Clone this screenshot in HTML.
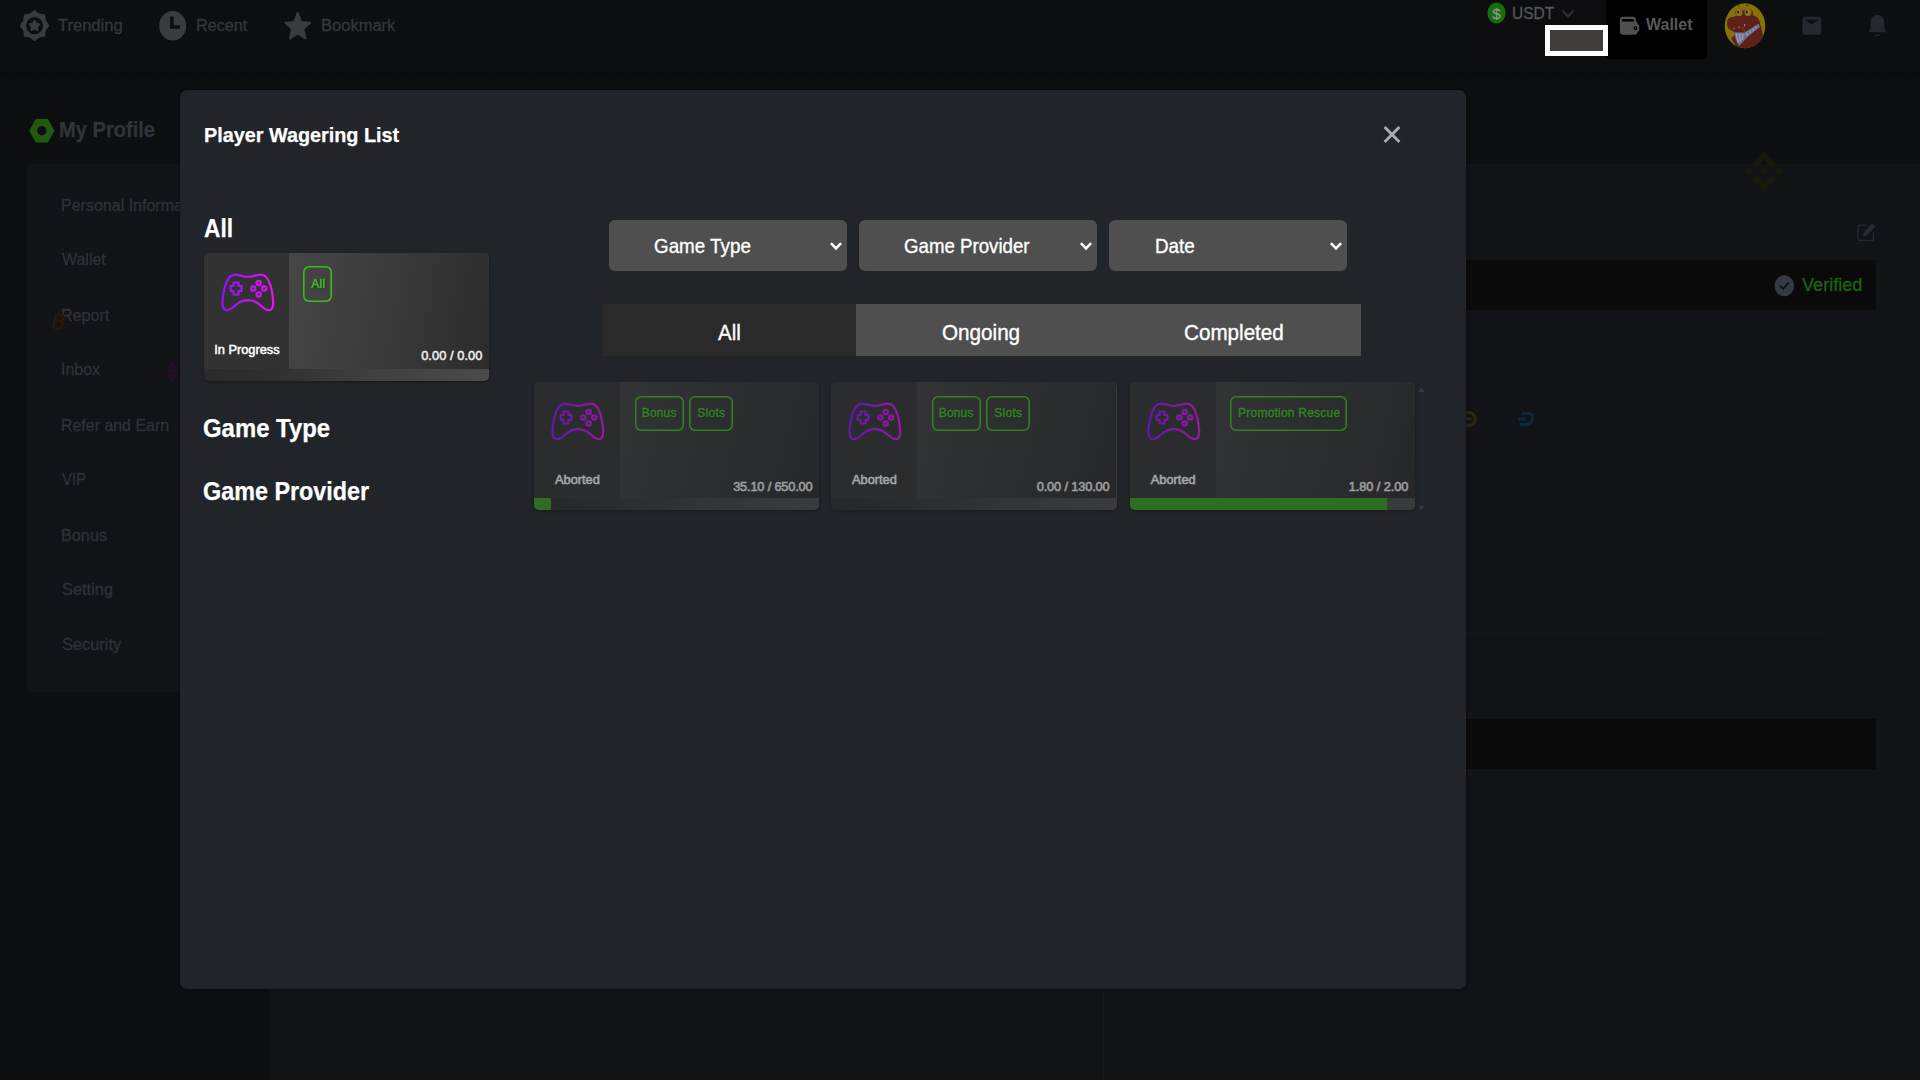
<!DOCTYPE html>
<html lang="en">
<head>
<meta charset="utf-8">
<title>Player Wagering List</title>
<style>
*{box-sizing:border-box;margin:0;padding:0}
html,body{width:1920px;height:1080px;overflow:hidden;background:#0d0e10;font-family:"Liberation Sans",sans-serif;color:#fff}
.abs{position:absolute}
.t{position:absolute;white-space:nowrap;line-height:1;font-size:16px;transform-origin:0 0}
.b{font-weight:bold}
/* header */
#hdr{position:absolute;left:0;top:0;width:1920px;height:73px;background:#0d0e10;border-bottom:1px dashed #07080a}
#hdrsh{position:absolute;left:0;top:73px;width:1920px;height:16px;background:linear-gradient(#0a0b0d,#0c0d0f 70%,#0d0e10)}
#usdtbox{position:absolute;left:1475px;top:0;width:131px;height:59px;background:#0d0d0f;border-radius:0 0 0 4px}
#walletbox{position:absolute;left:1606px;top:0;width:101px;height:59px;background:#000;border-radius:0 0 4px 0}
#redact{position:absolute;left:1545px;top:25px;width:63px;height:31px;background:#403e3c;border:5px solid #fff}
.nav{color:#35373c;-webkit-text-stroke:0.3px #35373c}
/* sidebar */
#side{position:absolute;left:26px;top:164px;width:250px;height:527.7px;background:#121316;border-radius:3px}
.si{color:#2f3237;left:61px;-webkit-text-stroke:0.3px #2f3237}
/* right panel */
#rp{position:absolute;left:270px;top:164px;width:1650px;height:916px;background:#121316}
#rpdiv{position:absolute;left:1103px;top:164px;width:1px;height:916px;background:#17181b}
.bar{position:absolute;background:#0a0a0a;border-radius:2px}
/* modal */
#modal{position:absolute;left:180px;top:90.4px;width:1286px;height:898.4px;background:#212429;border-radius:7px;box-shadow:0 0 3px rgba(0,0,0,.5)}
.h2{font-size:24px;font-weight:bold;color:#fff}
.sel{position:absolute;top:220px;width:238px;height:51px;background:#4f4f4f;border-radius:6px}
.sel .t{font-size:19px;top:237px}
.tab{position:absolute;top:304px;height:52px;background:#4f4f4f}
.card{position:absolute;width:285px;height:128px;border-radius:5px;overflow:hidden;background:linear-gradient(90deg,#2b2b2b 0%,#2f2f2f 22%,#404040 60%,#4b4b4b 100%);box-shadow:0 1px 3px rgba(0,0,0,.35)}
.card .l{position:absolute;left:0;top:0;width:86px;height:116px;background:#323232}
.card .r{position:absolute;left:86px;top:0;width:199px;height:116px;background:linear-gradient(100deg,#464646 0%,#3e3e3e 35%,#2c2c2c 100%)}
.card .pg{position:absolute;left:0;top:116px;height:12px;background:#39a01f}
.card .st{font-size:12.8px;color:#fff;-webkit-text-stroke:0.5px #fff}
.card .amt{font-size:12.8px;color:#f0f0f0;-webkit-text-stroke:0.5px #f0f0f0}
.tag{position:absolute;top:13px;height:36px;border:0;box-shadow:inset 0 0 0 1.6px #3cbc1c;border-radius:6px;color:#3fc21e;font-size:12px;-webkit-text-stroke:0.4px #3fc21e}
.tag span{position:absolute;top:12.2px;white-space:nowrap;line-height:1;text-shadow:1px 1px 2px rgba(0,0,0,.5)}
.dim{opacity:.6}
.dim .tag{top:14px;height:35px}
.dim .tag span{top:11.2px}
.dim .r{background:linear-gradient(105deg,#3f3f3f 0%,#363636 40%,#2a2a2a 100%)}
#sel1,#sel2,#sel3,#tab1,#tab2,#tab3{-webkit-text-stroke:0.35px #fff}
#t_title,.h2{-webkit-text-stroke:0.25px #fff}
#t_usdt{-webkit-text-stroke:0.3px #55575b}
#t_verified{-webkit-text-stroke:0.3px #1d6410}
#t_myprofile{-webkit-text-stroke:0.25px #30343a}
#c0 .l,#c0 .r{height:115.6px}
#c0 .l{width:85.2px}
#c0 .r{left:85.2px;width:199.8px}
</style>
</head>
<body>
<div id="hdrsh"></div>
<div id="hdr">
<div id="usdtbox"></div>
<div id="walletbox"></div>
<!-- trending icon -->
<svg class="abs" style="left:20px;top:10px" width="29" height="32" viewBox="0 0 29 32">
<path fill="#3a3b3f" stroke="#3a3b3f" stroke-width="1.2" stroke-linejoin="round" fill-rule="evenodd" d="M14.5 0.6 L18.9 4.2 L24.5 5.0 L25.2 10.9 L28.7 15.6 L25.2 20.3 L24.5 26.2 L18.9 27.0 L14.5 30.6 L10.1 27.0 L4.5 26.2 L3.8 20.3 L0.3 15.6 L3.8 10.9 L4.5 5.0 L10.1 4.2 Z M14.5 6.3 A9.1 9.3 0 1 0 14.5 24.9 A9.1 9.3 0 1 0 14.5 6.3 Z"/>
<path fill="#3a3b3f" stroke="#3a3b3f" stroke-width="1.6" stroke-linejoin="round" d="M14.5 10.6 L16.2 13.6 L19.5 14.3 L17.3 16.8 L17.6 20.2 L14.5 18.8 L11.4 20.2 L11.7 16.8 L9.5 14.3 L12.8 13.6 Z"/>
</svg>
<span class="t nav" id="t_trending" style="left:58.00px;top:18.47px;font-size:16.7px;transform:scaleX(0.9898)">Trending</span>
<!-- recent icon -->
<svg class="abs" style="left:159px;top:10px" width="28" height="32" viewBox="0 0 28 32">
<ellipse cx="13.7" cy="15.8" rx="13.5" ry="14.8" fill="#3a3b3f"/>
<path d="M12.9 6.6 V17 H21" fill="none" stroke="#0d0e10" stroke-width="3.6"/>
</svg>
<span class="t nav" id="t_recent" style="left:195.83px;top:18.44px;font-size:16.7px;transform:scaleX(0.9706)">Recent</span>
<!-- star -->
<svg class="abs" style="left:284px;top:11px" width="28" height="32" viewBox="0 0 28 30" preserveAspectRatio="none">
<path fill="#3a3b3f" stroke="#3a3b3f" stroke-width="2" stroke-linejoin="round" d="M13.7 2 L17.2 10.3 L26 11 L19.3 16.8 L21.4 25.6 L13.7 20.9 L6 25.6 L8.1 16.8 L1.4 11 L10.2 10.3 Z"/>
</svg>
<span class="t nav" id="t_bookmark" style="left:320.81px;top:18.41px;font-size:16.7px;transform:scaleX(0.9896)">Bookmark</span>
<!-- usdt -->
<svg class="abs" style="left:1487px;top:2px" width="19" height="22" viewBox="0 0 19 22">
<ellipse cx="9.5" cy="11" rx="9.1" ry="10.5" fill="#186d0c"/>
<text x="9.5" y="16.6" text-anchor="middle" font-family="Liberation Sans, sans-serif" font-size="15.5" fill="#98a298">$</text>
</svg>
<span class="t" id="t_usdt" style="left:1511.67px;top:5.92px;color:#55575b;font-size:16.7px;transform:scaleX(0.9314)">USDT</span>
<svg class="abs" style="left:1561px;top:9px" width="14" height="10" viewBox="0 0 14 10"><path d="M1.5 1.5 L7 7.5 L12.5 1.5" fill="none" stroke="#2c2e33" stroke-width="2"/></svg>
<div id="redact"></div>
<!-- wallet -->
<svg class="abs" style="left:1619px;top:16px" width="22" height="20" viewBox="0 0 22 20">
<path fill="#4f4f4f" fill-rule="evenodd" d="M4.2 0.8 H13.6 A3.4 3.4 0 0 1 17 4.2 V5.2 A1.6 1.6 0 0 1 18.6 6.8 V8.6 H19 A1.3 1.3 0 0 1 20.3 9.9 V14.2 A1.3 1.3 0 0 1 19 15.5 H18.6 V15.6 A3.2 3.2 0 0 1 15.4 18.8 H4.2 A3.3 3.3 0 0 1 0.9 15.5 V4.1 A3.3 3.3 0 0 1 4.2 0.8 Z M4 3 A1.2 1.2 0 0 0 4 5.4 H15 V4.6 A1.6 1.6 0 0 0 13.4 3 Z M16.4 10.3 A1.9 1.9 0 1 0 16.4 14.1 A1.9 1.9 0 1 0 16.4 10.3 Z"/>
<circle cx="16.5" cy="12.2" r="0.7" fill="#4f4f4f"/>
</svg>
<span class="t b" id="t_wallet" style="left:1646.30px;top:17.06px;color:#57585b;font-size:16.7px;transform:scaleX(0.9578)">Wallet</span>
<!-- avatar -->
<svg class="abs" style="left:1724px;top:3px" width="42" height="46" viewBox="0 0 42 46">
<defs><clipPath id="avc"><ellipse cx="21" cy="22.8" rx="20.3" ry="22.5"/></clipPath></defs>
<g clip-path="url(#avc)">
<rect width="42" height="46" fill="#857303"/>
<path fill="#5e2018" d="M3.4 17 Q4.5 14.6 6 14.4 L12.6 13 Q10.4 10 11.4 7.2 Q12.4 5.6 15 5.8 Q18.6 5.4 19.6 8 Q20.6 5.4 24 5.8 Q27.6 5.6 28.6 8 Q29.4 10.6 28.8 12 L33.6 14.4 L34.6 16.6 L35.8 19 L36.2 22 L37.4 24.6 L37.8 28 L38.8 31 L39 35 L41 38 L41 46 H14 L8.6 38 L7.2 35 L10 33 L10.4 29.2 L4 25.2 Q2.4 21 3.4 17 Z"/>
<ellipse cx="15" cy="9.2" rx="3.6" ry="4.1" fill="#8a6410"/><ellipse cx="24" cy="9.2" rx="3.6" ry="4.1" fill="#8a6410"/>
<ellipse cx="15" cy="9.2" rx="2.6" ry="3.2" fill="#86781c"/><ellipse cx="24" cy="9.2" rx="2.6" ry="3.2" fill="#86781c"/>
<ellipse cx="14.2" cy="9" rx="0.9" ry="1.3" fill="#111"/><ellipse cx="22.8" cy="9" rx="0.9" ry="1.3" fill="#111"/>
<path d="M13.6 2.4 L15.8 3.2 M22 2.6 L25 2.4" stroke="#5c4c06" stroke-width="1.2"/>
<path fill="#65729c" d="M9.8 29.4 L20.6 29.6 L34.4 20.8 L36 23.8 L22.6 34.8 L15 43 L12.4 38 Z"/>
<path stroke="#9a9b9c" stroke-width="1.5" fill="none" d="M12.4 30.4 L14.4 39.6 M15.6 30.4 L16.4 38.6 M18.8 30.8 L18.4 37 M22.2 29.6 L23.4 32.6 M25.4 27.6 L26.6 30 M28.4 25.6 L29.8 27.6 M31.4 23.6 L32.8 25.4"/>
<path fill="#8c8a86" d="M9.4 24.6 h1 v1.6 h-1 z M14.2 23.4 h1.2 v1.6 h-1.2 z M20 21 h1.2 v2.2 h-1.2 z"/>
<path stroke="#7a6a4a" stroke-width="0.6" d="M18.2 24 L21.4 29.4"/>
</g>
</svg>
<!-- mail -->
<svg class="abs" style="left:1802px;top:16px" width="20" height="20" viewBox="0 0 20 20">
<rect x="0.3" y="0.8" width="19" height="18" rx="3.4" fill="#25282d"/>
<path d="M2.6 3.4 H17 L9.8 8.4 Z" fill="#0d0e10"/>
</svg>
<!-- bell -->
<svg class="abs" style="left:1868px;top:14px" width="19" height="24" viewBox="0 0 19 24">
<path fill="#25282d" d="M9.5 0.8 C14 0.8 16.4 4.4 16.4 9 V14.6 Q17.6 15.8 17.6 17 V18.2 H1.4 V17 Q1.4 15.8 2.6 14.6 V9 C2.6 4.4 5 0.8 9.5 0.8 Z"/>
<rect x="7" y="20.4" width="5" height="1.6" rx="0.8" fill="#25282d"/>
</svg>
</div>
<!-- my profile -->
<svg class="abs" style="left:28px;top:117px" width="28" height="28" viewBox="0 0 28 28">
<path fill="#1f5a10" stroke="#1f5a10" stroke-width="3" stroke-linejoin="round" d="M3 13.7 L8.6 3.4 H19.1 L24.7 13.7 L19.1 24 H8.6 Z"/>
<circle cx="13.85" cy="13.7" r="4.7" fill="#0d0e10"/>
</svg>
<span class="t b" id="t_myprofile" style="left:58.77px;top:119.01px;font-size:21.6px;color:#30343a;transform:scaleX(0.9307)">My Profile</span>
<div id="side"></div>
<span class="t si" id="s1" style="top:197.64px;left:60.63px;font-size:16.6px;transform:scaleX(0.9650)">Personal Information</span>
<span class="t si" id="s2" style="top:251.72px;left:61.60px;font-size:16.6px;transform:scaleX(0.9613)">Wallet</span>
<span class="t si" id="s3" style="top:308.01px;left:60.63px;font-size:16.6px;transform:scaleX(0.9696)">Report</span>
<span class="t si" id="s4" style="top:362.12px;left:60.64px;font-size:16.6px;transform:scaleX(0.9629)">Inbox</span>
<span class="t si" id="s5" style="top:417.74px;left:60.64px;font-size:16.6px;transform:scaleX(0.9604)">Refer and Earn</span>
<span class="t si" id="s6" style="top:472.16px;left:61.60px;font-size:16.6px;transform:scaleX(0.8996)">VIP</span>
<span class="t si" id="s7" style="top:527.71px;left:60.62px;font-size:16.6px;transform:scaleX(0.9792)">Bonus</span>
<span class="t si" id="s8" style="top:582.18px;left:61.60px;font-size:16.6px;transform:scaleX(0.9877)">Setting</span>
<span class="t si" id="s9" style="top:637.12px;left:61.60px;font-size:16.6px;transform:scaleX(0.9861)">Security</span>
<div id="rp"></div>
<div id="rpdiv"></div>
<div class="bar" style="left:1400px;top:260px;width:476px;height:50px"></div>
<div class="bar" style="left:1400px;top:719px;width:476px;height:50px"></div>
<div class="abs" style="left:1400px;top:633px;width:426px;height:1px;background:#17181b"></div>
<!-- edit icon -->
<svg class="abs" style="left:1857px;top:222px" width="19" height="20" viewBox="0 0 19 20">
<path d="M9.5 3.2 H2.2 A1 1 0 0 0 1.2 4.2 V17.6 A1 1 0 0 0 2.2 18.6 H15.4 A1 1 0 0 0 16.4 17.6 V10.5" fill="none" stroke="#26282c" stroke-width="1.5"/>
<path d="M5.8 14.4 L6.9 10 L15.4 1.2 L18.6 4.4 L10 13.2 Z" fill="#272a2f"/>
</svg>
<!-- verified -->
<svg class="abs" style="left:1774px;top:275px" width="21" height="22" viewBox="0 0 21 22">
<ellipse cx="10.3" cy="10.8" rx="9.8" ry="10.5" fill="#353943"/>
<path d="M6 10.6 L9.2 13.8 L14.6 7.6" fill="none" stroke="#0b0b0c" stroke-width="1.5"/>
</svg>
<span class="t" id="t_verified" style="left:1802.10px;top:275.31px;color:#1d6410;font-size:19px;transform:scaleX(0.9521)">Verified</span>
<!-- binance-ish deco -->
<svg class="abs" style="left:1744.5px;top:150.5px" width="38" height="40.5" viewBox="0 0 100 100" preserveAspectRatio="none">
<g fill="#18180f"><path d="M50 0 L81 31 L69.5 42.5 L50 23 L30.5 42.5 L19 31 Z"/><path d="M50 100 L81 69 L69.5 57.5 L50 77 L30.5 57.5 L19 69 Z"/><path d="M0 50 L11.5 38.5 L23 50 L11.5 61.5 Z"/><path d="M100 50 L88.5 38.5 L77 50 L88.5 61.5 Z"/><path d="M50 38.5 L61.5 50 L50 61.5 L38.5 50 Z"/></g>
</svg>
<!-- tiny deco icons -->
<svg class="abs" style="left:1465px;top:409px" width="14" height="20" viewBox="0 0 14 20"><circle cx="3.6" cy="10" r="6.6" fill="none" stroke="#2f2810" stroke-width="3"/><path d="M0 10 H6.5" stroke="#2f2810" stroke-width="2.6"/></svg>
<svg class="abs" style="left:1516px;top:409px" width="20" height="20" viewBox="0 0 20 20"><path d="M5.4 4.2 H11.4 Q17.6 4.2 16.4 10 Q15.2 15.6 9.4 15.6 H3.6 M2.4 9.9 H9.6" fill="none" stroke="#0d2a3c" stroke-width="3" stroke-linejoin="round"/></svg>
<svg class="abs" style="left:50px;top:311px" width="17" height="21" viewBox="0 0 17 21"><g transform="rotate(14 8.5 10.5)" fill="none" stroke="#27190d" stroke-width="2.4"><path d="M4.6 3.6 H9.2 Q12.4 3.6 12.4 6.6 Q12.4 9.8 9.2 9.8 H4.6 H9.8 Q13.4 9.8 13.4 13.2 Q13.4 16.8 9.8 16.8 H4.6 Z"/><path d="M6.6 1.2 V3.6 M9.8 1.2 V3.6 M6.6 16.8 V19.4 M9.8 16.8 V19.4" stroke-width="1.8"/></g></svg>
<svg class="abs" style="left:166px;top:362px" width="13" height="21" viewBox="0 0 13 21"><path d="M6.5 1 L11.8 10.4 L6.5 13.6 L1.2 10.4 Z M1.6 12.4 L6.5 15.4 L11.4 12.4 L6.5 20 Z M6.5 1 V20 M1.2 10.4 L6.5 8 L11.8 10.4" fill="none" stroke="#2b0c30" stroke-width="1.1"/></svg>
<div id="modal"></div>
<svg width="0" height="0" style="position:absolute"><defs><linearGradient id="gpg" gradientUnits="userSpaceOnUse" x1="0" y1="0" x2="53" y2="0"><stop offset="0" stop-color="#8b12ff"/><stop offset="1" stop-color="#e813ee"/></linearGradient></defs></svg>
<span class="t b" id="t_title" style="left:204.46px;top:124.00px;font-size:21px;transform:scaleX(0.9429)">Player Wagering List</span>
<svg class="abs" style="left:1382px;top:124px" width="20" height="20" viewBox="0 0 20 20"><path d="M2.6 3 L17.4 18 M17.4 3 L2.6 18" stroke="#a9adb4" stroke-width="2.9" fill="none"/></svg>
<span class="t h2" id="h_all" style="left:204.30px;top:216.46px;font-size:25.2px;transform:scaleX(0.9010)">All</span>
<span class="t h2" id="h_gt" style="left:202.95px;top:415.66px;font-size:25.2px;transform:scaleX(0.9495)">Game Type</span>
<span class="t h2" id="h_gp" style="left:202.97px;top:478.76px;font-size:25.2px;transform:scaleX(0.9272)">Game Provider</span>
<div class="card" id="c0" style="left:204px;top:253px"><div class="l"></div><div class="r"></div><svg class="abs" style="left:16px;top:19px" width="55" height="41" viewBox="-1.45 -0.55 55 41">
<g fill="none" stroke="url(#gpg)" stroke-width="2.25" stroke-linejoin="round" stroke-linecap="round">
<path d="M13.2 2 C17.5 2 21.5 4.3 26.4 4.3 C31.3 4.3 35.3 2 39.6 2 C44.5 2 47.2 7 49 13 C50.8 19.4 52 27 51.6 32.5 C51.3 36.5 49 38 46.6 37.6 C42.5 36.8 40 33.2 36 30.5 C33 28.4 30 27.6 26.4 27.6 C22.8 27.6 19.8 28.4 16.8 30.5 C12.8 33.2 10.3 36.8 6.2 37.6 C3.8 38 1.5 36.5 1.2 32.5 C0.8 27 2 19.4 3.8 13 C5.6 7 8.3 2 13.2 2 Z"/>
<path d="M12.1 10 H17.1 V13.5 H20 V18.5 H17.1 V22 H12.1 V18.5 H9.2 V13.5 H12.1 Z" stroke-width="2.1"/>
<circle cx="37.2" cy="10.4" r="2.15"/><circle cx="31.8" cy="16" r="2.15"/><circle cx="42.7" cy="16" r="2.15"/><circle cx="37.2" cy="22" r="2.15"/>
</g></svg><span id="c0_st" class="t st" style="left:10.2px;top:90.8px">In Progress</span><div class="tag" id="c0_tag1" style="left:99.2px;width:29.2px"><span style="left:8.1px;letter-spacing:0.30px">All</span></div><span id="c0_amt" class="t amt" style="right:6.5px;top:96.9px;letter-spacing:.08px">0.00 / 0.00</span></div>
<div class="sel" style="left:608.5px"></div><span class="t" id="sel1" style="left:654.49px;top:235.66px;font-size:20.6px;transform:scaleX(0.9134)">Game Type</span><svg class="abs" style="left:828.7px;top:241px" width="14" height="11" viewBox="0 0 14 11"><path d="M1.9 2.2 L7 7.4 L12.1 2.2" fill="none" stroke="#fff" stroke-width="2.5"/></svg>
<div class="sel" style="left:858.5px"></div><span class="t" id="sel2" style="left:904.19px;top:235.66px;font-size:20.6px;transform:scaleX(0.9068)">Game Provider</span><svg class="abs" style="left:1078.7px;top:241px" width="14" height="11" viewBox="0 0 14 11"><path d="M1.9 2.2 L7 7.4 L12.1 2.2" fill="none" stroke="#fff" stroke-width="2.5"/></svg>
<div class="sel" style="left:1109.0px"></div><span class="t" id="sel3" style="left:1154.68px;top:235.66px;font-size:20.6px;transform:scaleX(0.9156)">Date</span><svg class="abs" style="left:1329.2px;top:241px" width="14" height="11" viewBox="0 0 14 11"><path d="M1.9 2.2 L7 7.4 L12.1 2.2" fill="none" stroke="#fff" stroke-width="2.5"/></svg>
<div class="tab" style="left:602.5px;width:253px;background:#2a2a2a"></div>
<div class="tab" style="left:855.5px;width:505px"></div>
<span class="t" id="tab1" style="left:717.90px;top:321.54px;font-size:21.8px;transform:scaleX(0.9409)">All</span>
<span class="t" id="tab2" style="left:942.35px;top:321.54px;font-size:21.8px;transform:scaleX(0.9479)">Ongoing</span>
<span class="t" id="tab3" style="left:1184.15px;top:321.54px;font-size:21.8px;transform:scaleX(0.9469)">Completed</span>
<div class="card dim" id="c1" style="left:534px;top:382px"><div class="l"></div><div class="r"></div><div class="pg" style="width:16.5px"></div><svg class="abs" style="left:16px;top:19px" width="55" height="41" viewBox="-1.45 -0.55 55 41">
<g fill="none" stroke="url(#gpg)" stroke-width="2.25" stroke-linejoin="round" stroke-linecap="round">
<path d="M13.2 2 C17.5 2 21.5 4.3 26.4 4.3 C31.3 4.3 35.3 2 39.6 2 C44.5 2 47.2 7 49 13 C50.8 19.4 52 27 51.6 32.5 C51.3 36.5 49 38 46.6 37.6 C42.5 36.8 40 33.2 36 30.5 C33 28.4 30 27.6 26.4 27.6 C22.8 27.6 19.8 28.4 16.8 30.5 C12.8 33.2 10.3 36.8 6.2 37.6 C3.8 38 1.5 36.5 1.2 32.5 C0.8 27 2 19.4 3.8 13 C5.6 7 8.3 2 13.2 2 Z"/>
<path d="M12.1 10 H17.1 V13.5 H20 V18.5 H17.1 V22 H12.1 V18.5 H9.2 V13.5 H12.1 Z" stroke-width="2.1"/>
<circle cx="37.2" cy="10.4" r="2.15"/><circle cx="31.8" cy="16" r="2.15"/><circle cx="42.7" cy="16" r="2.15"/><circle cx="37.2" cy="22" r="2.15"/>
</g></svg><span id="c1_st" class="t st" style="left:21px;top:92px">Aborted</span><div class="tag" id="c1_tag1" style="left:100.8px;width:49.2px"><span style="left:7.0px;letter-spacing:0.15px">Bonus</span></div><div class="tag" id="c1_tag2" style="left:155.3px;width:43.6px"><span style="left:8.0px;letter-spacing:0.25px">Slots</span></div><span id="c1_amt" class="t amt" style="right:6.5px;top:98.9px;letter-spacing:-0.18px">35.10 / 650.00</span></div>
<div class="card dim" id="c2" style="left:831px;top:382px;width:286px"><div class="l"></div><div class="r"></div><svg class="abs" style="left:16px;top:19px" width="55" height="41" viewBox="-1.45 -0.55 55 41">
<g fill="none" stroke="url(#gpg)" stroke-width="2.25" stroke-linejoin="round" stroke-linecap="round">
<path d="M13.2 2 C17.5 2 21.5 4.3 26.4 4.3 C31.3 4.3 35.3 2 39.6 2 C44.5 2 47.2 7 49 13 C50.8 19.4 52 27 51.6 32.5 C51.3 36.5 49 38 46.6 37.6 C42.5 36.8 40 33.2 36 30.5 C33 28.4 30 27.6 26.4 27.6 C22.8 27.6 19.8 28.4 16.8 30.5 C12.8 33.2 10.3 36.8 6.2 37.6 C3.8 38 1.5 36.5 1.2 32.5 C0.8 27 2 19.4 3.8 13 C5.6 7 8.3 2 13.2 2 Z"/>
<path d="M12.1 10 H17.1 V13.5 H20 V18.5 H17.1 V22 H12.1 V18.5 H9.2 V13.5 H12.1 Z" stroke-width="2.1"/>
<circle cx="37.2" cy="10.4" r="2.15"/><circle cx="31.8" cy="16" r="2.15"/><circle cx="42.7" cy="16" r="2.15"/><circle cx="37.2" cy="22" r="2.15"/>
</g></svg><span id="c2_st" class="t st" style="left:21px;top:92px">Aborted</span><div class="tag" id="c2_tag1" style="left:100.8px;width:49.2px"><span style="left:7.0px;letter-spacing:0.15px">Bonus</span></div><div class="tag" id="c2_tag2" style="left:155.3px;width:43.6px"><span style="left:8.0px;letter-spacing:0.25px">Slots</span></div><span id="c2_amt" class="t amt" style="right:7.5px;top:98.9px;letter-spacing:-0.15px">0.00 / 130.00</span></div>
<div class="card dim" id="c3" style="left:1129.8px;top:382px"><div class="l"></div><div class="r"></div><div class="pg" style="width:257.5px"></div><svg class="abs" style="left:16px;top:19px" width="55" height="41" viewBox="-1.45 -0.55 55 41">
<g fill="none" stroke="url(#gpg)" stroke-width="2.25" stroke-linejoin="round" stroke-linecap="round">
<path d="M13.2 2 C17.5 2 21.5 4.3 26.4 4.3 C31.3 4.3 35.3 2 39.6 2 C44.5 2 47.2 7 49 13 C50.8 19.4 52 27 51.6 32.5 C51.3 36.5 49 38 46.6 37.6 C42.5 36.8 40 33.2 36 30.5 C33 28.4 30 27.6 26.4 27.6 C22.8 27.6 19.8 28.4 16.8 30.5 C12.8 33.2 10.3 36.8 6.2 37.6 C3.8 38 1.5 36.5 1.2 32.5 C0.8 27 2 19.4 3.8 13 C5.6 7 8.3 2 13.2 2 Z"/>
<path d="M12.1 10 H17.1 V13.5 H20 V18.5 H17.1 V22 H12.1 V18.5 H9.2 V13.5 H12.1 Z" stroke-width="2.1"/>
<circle cx="37.2" cy="10.4" r="2.15"/><circle cx="31.8" cy="16" r="2.15"/><circle cx="42.7" cy="16" r="2.15"/><circle cx="37.2" cy="22" r="2.15"/>
</g></svg><span id="c3_st" class="t st" style="left:21px;top:92px">Aborted</span><div class="tag" id="c3_tag1" style="left:100.3px;width:116.8px"><span style="left:8.0px;letter-spacing:0.22px">Promotion Rescue</span></div><span id="c3_amt" class="t amt" style="right:6.5px;top:98.9px;letter-spacing:-0.08px">1.80 / 2.00</span></div>
<svg class="abs" style="left:1418px;top:387px" width="7" height="5" viewBox="0 0 7 5"><path d="M0 5 L3.5 0.5 L7 5 Z" fill="#34344a"/></svg>
<svg class="abs" style="left:1418px;top:506px" width="7" height="5" viewBox="0 0 7 5"><path d="M0 0 L3.5 4.5 L7 0 Z" fill="#34344a"/></svg>
</body>
</html>
